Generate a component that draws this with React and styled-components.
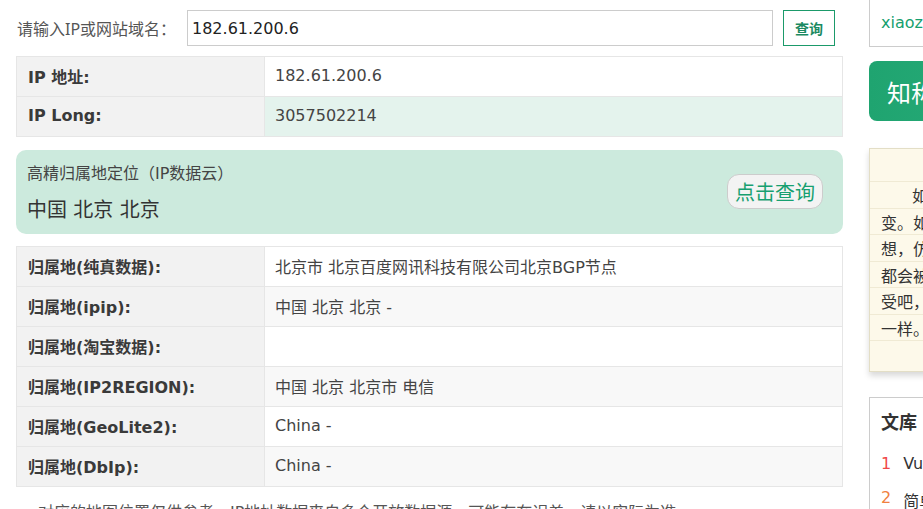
import React from "react";
import styled, { createGlobalStyle } from "styled-components";

const Global = createGlobalStyle`
  html, body { margin: 0; padding: 0; overflow: hidden; background: #fff; }
  body { font-family: "DejaVu Sans", "Noto Sans CJK SC", sans-serif; color: #444; }
  * { box-sizing: border-box; }
`;

const cjk = `"DejaVu Sans", "Noto Sans CJK SC", sans-serif`;

const Page = styled.div`
  display: flex;
  gap: 26px;
  width: 1300px;
  padding-left: 16px;
  height: 509px;
  overflow: hidden;
`;

const Main = styled.div`
  width: 827px;
  flex-shrink: 0;
  display: flex;
  flex-direction: column;
  & > * { flex-shrink: 0; }
`;

const SearchRow = styled.form`
  display: flex;
  align-items: center;
  height: 36px;
  margin: 10px 0 0 0;
  padding-left: 1px;
`;

const Label = styled.label`
  font-family: "Noto Sans", "Noto Sans CJK SC", sans-serif;
  font-size: 16px;
  color: #555;
  width: 170px;
`;

const Input = styled.input`
  width: 586px;
  height: 36px;
  border: 1px solid #ccc;
  padding: 0 4px;
  font-family: ${cjk};
  font-size: 16px;
  color: #222;
  outline: none;
`;

const SearchButton = styled.button`
  margin-left: 10px;
  width: 52px;
  height: 36px;
  border: 1px solid #1b9a6a;
  background: #fff;
  color: #1b8a62;
  font-family: "Noto Sans CJK SC", sans-serif;
  font-weight: bold;
  font-size: 14px;
  padding: 0;
`;

const Table = styled.table`
  width: 827px;
  border-collapse: collapse;
  margin-top: ${(p) => p.$mt}px;
  table-layout: fixed;
  border: 1px solid #e6e6e6;
`;

const Th = styled.th`
  width: 248px;
  height: 40px;
  background: #f2f2f2;
  border: 1px solid #e6e6e6;
  text-align: left;
  padding: 0 0 2px 11px;
  font-family: ${cjk};
  font-weight: bold;
  font-size: 16px;
  color: #3a3a3a;
`;

const Td = styled.td`
  height: 40px;
  border: 1px solid #e6e6e6;
  background: ${(p) => p.$bg || "#fff"};
  padding: 0 0 2px 10px;
  font-family: ${cjk};
  font-size: 16px;
  color: #444;
`;

const Card = styled.div`
  margin-top: 13px;
  height: 84px;
  border-radius: 10px;
  background: #cceadd;
  display: flex;
  align-items: center;
  justify-content: space-between;
  padding: 0 20px 0 11px;
`;

const CardText = styled.div`
  display: flex;
  flex-direction: column;
  gap: 10px;
  font-family: ${cjk};
  margin-top: -2px;
`;

const CardTitle = styled.div`
  font-size: 16px;
  color: #444;
`;

const CardPlace = styled.div`
  font-size: 20px;
  color: #333;
`;

const CardButton = styled.button`
  height: 35px;
  padding: 0 7px;
  margin-top: -2px;
  border: 1px solid #ccc;
  border-radius: 12px;
  background: #f3f3f3;
  color: #17a070;
  font-family: "Noto Sans CJK SC", sans-serif;
  font-size: 20px;
`;

const FootLine = styled.p`
  margin: 15px 0 0 0;
  padding-left: 22px;
  font-family: ${cjk};
  font-size: 16px;
  line-height: 22px;
  color: #555;
  white-space: nowrap;
`;

const Side = styled.div`
  width: 300px;
  flex-shrink: 0;
  display: flex;
  flex-direction: column;
  & > * { flex-shrink: 0; }
`;

const LinkBox = styled.div`
  height: 47px;
  border: 1px solid #ccc;
  border-top: none;
  padding: 13px 0 0 11px;
  font-family: ${cjk};
  font-size: 16px;
  color: #16a06e;
`;

const Banner = styled.div`
  margin-top: 14px;
  height: 60px;
  border-radius: 8px;
  background: linear-gradient(90deg, #1fa470, #34b382);
  color: #fff;
  font-family: "Noto Sans CJK SC", sans-serif;
  font-size: 24px;
  display: flex;
  align-items: center;
  padding-left: 18px;
`;

const Note = styled.div`
  margin-top: 27px;
  border: 1px solid #e3dec6;
  background: #fdf9ea;
  box-shadow: 0 4px 6px rgba(0, 0, 0, 0.15);
  padding-top: 32px;
  padding-bottom: 30px;
`;

const NoteLine = styled.div`
  height: 26.6px;
  border-top: 1px solid #f0ead4;
  padding-left: ${(p) => (p.$indent ? 42 : 11)}px;
  font-family: "Noto Sans CJK SC", sans-serif;
  font-size: 16px;
  line-height: 26px;
  color: #333;
  white-space: nowrap;
  &:last-child { border-bottom: 1px solid #f0ead4; }
`;

const Library = styled.div`
  margin-top: 25px;
  border: 1px solid #ccc;
  padding: 10px 0 0 11px;
  height: 200px;
  font-family: ${cjk};
`;

const LibTitle = styled.div`
  font-family: "Noto Sans CJK SC", sans-serif;
  font-size: 18px;
  font-weight: bold;
  color: #333;
  margin-bottom: 20px;
`;

const LibItem = styled.div`
  font-size: 16px;
  color: #333;
  height: 34px;
  display: flex;
  gap: 12px;
`;

const LibNum = styled.span`
  color: ${(p) => p.$color};
`;

const rows2 = [
  ["归属地(纯真数据):", "北京市 北京百度网讯科技有限公司北京BGP节点"],
  ["归属地(ipip):", "中国 北京 北京 -"],
  ["归属地(淘宝数据):", ""],
  ["归属地(IP2REGION):", "中国 北京 北京市 电信"],
  ["归属地(GeoLite2):", "China -"],
  ["归属地(DbIp):", "China -"],
];

export default function App() {
  return (
    <>
      <Global />
      <Page>
        <Main>
          <SearchRow onSubmit={(e) => e.preventDefault()}>
            <Label>请输入IP或网站域名：</Label>
            <Input defaultValue="182.61.200.6" />
            <SearchButton>查询</SearchButton>
          </SearchRow>
          <Table $mt={10}>
            <tbody>
              <tr>
                <Th>IP 地址:</Th>
                <Td>182.61.200.6</Td>
              </tr>
              <tr>
                <Th>IP Long:</Th>
                <Td $bg="#e4f3ed">3057502214</Td>
              </tr>
            </tbody>
          </Table>
          <Card>
            <CardText>
              <CardTitle>高精归属地定位（IP数据云）</CardTitle>
              <CardPlace>中国 北京 北京</CardPlace>
            </CardText>
            <CardButton>点击查询</CardButton>
          </Card>
          <Table $mt={12}>
            <tbody>
              {rows2.map(([k, v], i) => (
                <tr key={k}>
                  <Th>{k}</Th>
                  <Td $bg={i % 2 ? "#f8f8f8" : "#fff"}>{v}</Td>
                </tr>
              ))}
            </tbody>
          </Table>
          <FootLine>对应的地图位置仅供参考，IP地址数据来自多个开放数据源，可能存在误差，请以实际为准。</FootLine>
        </Main>
        <Side>
          <LinkBox>xiaoz.me</LinkBox>
          <Banner>知称</Banner>
          <Note>
            <NoteLine $indent>如</NoteLine>
            <NoteLine>变。如</NoteLine>
            <NoteLine>想，仿</NoteLine>
            <NoteLine>都会被</NoteLine>
            <NoteLine>受吧，</NoteLine>
            <NoteLine>一样。</NoteLine>
          </Note>
          <Library>
            <LibTitle>文库</LibTitle>
            <LibItem><LibNum $color="#f04848">1</LibNum>Vue</LibItem>
            <LibItem><LibNum $color="#f08040">2</LibNum>简单</LibItem>
          </Library>
        </Side>
      </Page>
    </>
  );
}
